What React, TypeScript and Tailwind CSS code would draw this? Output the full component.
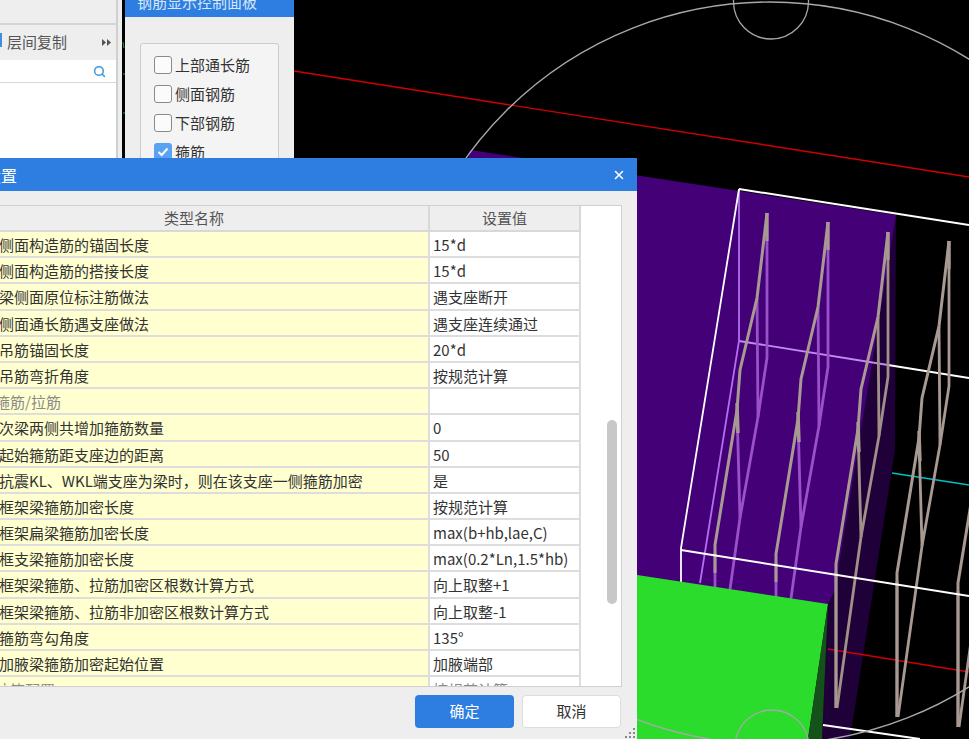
import { Search, X } from "lucide-react"

const font = { fontFamily: '"Noto Sans CJK SC", "Noto Sans", sans-serif' }

const rows = [
  { name: "侧面构造筋的锚固长度", value: "15*d" },
  { name: "侧面构造筋的搭接长度", value: "15*d" },
  { name: "梁侧面原位标注筋做法", value: "遇支座断开" },
  { name: "侧面通长筋遇支座做法", value: "遇支座连续通过" },
  { name: "吊筋锚固长度", value: "20*d" },
  { name: "吊筋弯折角度", value: "按规范计算" },
  { name: "箍筋/拉筋", value: "", section: true },
  { name: "次梁两侧共增加箍筋数量", value: "0" },
  { name: "起始箍筋距支座边的距离", value: "50" },
  { name: "抗震KL、WKL端支座为梁时，则在该支座一侧箍筋加密", value: "是" },
  { name: "框架梁箍筋加密长度", value: "按规范计算" },
  { name: "框架扁梁箍筋加密长度", value: "max(b+hb,lae,C)" },
  { name: "框支梁箍筋加密长度", value: "max(0.2*Ln,1.5*hb)" },
  { name: "框架梁箍筋、拉筋加密区根数计算方式", value: "向上取整+1" },
  { name: "框架梁箍筋、拉筋非加密区根数计算方式", value: "向上取整-1" },
  { name: "箍筋弯勾角度", value: "135°" },
  { name: "加腋梁箍筋加密起始位置", value: "加腋端部" },
  { name: "拉筋配置", value: "按规范计算", section: true },
]

const checks = [
  { label: "上部通长筋", checked: false },
  { label: "侧面钢筋", checked: false },
  { label: "下部钢筋", checked: false },
  { label: "箍筋", checked: true },
]

// stirrup tops in the 3d view, with leg colours; tanEnd is where the outer leg stops being tan
const stirrups = [
  { x: 767, y: 213, inner: "#9a50c8", tanEnd: 360 },
  { x: 828, y: 222, inner: "#9a50c8", tanEnd: 360 },
  { x: 888, y: 232, inner: "#a09088", tanEnd: 476 },
  { x: 949, y: 241, inner: "#a89a92", tanEnd: 476 },
  { x: 1010, y: 251, inner: "#a89a92", tanEnd: 476 },
]

function pts(x: number, y: number, list: number[][]) {
  return list.map((p) => `${x + p[0]},${y + p[1]}`).join(" ")
}

function Scene() {
  return (
    <svg className="absolute inset-0" width="969" height="739" viewBox="0 0 969 739" fill="none">
      <line x1="294" y1="71" x2="969" y2="177" stroke="#d00000" strokeWidth="1.4" />
      <line x1="123" y1="42" x2="124" y2="48" stroke="#1f9a3c" />
      <line x1="123" y1="74" x2="125" y2="74" stroke="#1a9a9a" />
      <line x1="123" y1="113" x2="125" y2="113" stroke="#1a9a9a" />
      <polygon points="896,215 895,450 850,739 822,739 828,604" fill="#200038" />
      <polygon points="470,150 896,215 835,590 828,604 400,604 400,165 467,165" fill="#440077" />
      <line x1="828" y1="649" x2="969" y2="672" stroke="#d00000" strokeWidth="1.4" />
      <line x1="892" y1="473" x2="969" y2="485" stroke="#00c0c8" strokeWidth="1.4" />

      <polyline points="739,341 888,365" stroke="#c08cf0" strokeWidth="1.8" />
      <polyline points="888,365 969,378" stroke="#ffffff" strokeWidth="1.8" />
      <polyline points="739,189 739,341 700,583" stroke="#b070f0" strokeWidth="1.8" />

      {stirrups.map((s) => (
        <g key={s.x} strokeLinejoin="round">
          <polyline
            points={pts(s.x, s.y, [[0, 0], [0, 145], [-9, 204], [-27, 305], [-51, 476]])}
            stroke={s.inner}
            strokeWidth="2.8"
          />
          <polyline points={pts(s.x, s.y, [[-10, 85], [-9, 204]])} stroke={s.inner} strokeWidth="2.8" />
          <polyline points={pts(s.x, s.y, [[-30, 197], [-27, 305]])} stroke={s.inner} strokeWidth="2.8" />
          <polyline points={pts(s.x, s.y, [[-52, 340], [-52, 476]])} stroke={s.inner} strokeWidth="2.8" />
          <polyline points={pts(s.x, s.y, [[0, 0], [0, 28]])} stroke="#a89a92" strokeWidth="3.2" />
          <polyline points={pts(s.x, s.y, [[-30, 190], [-29, 220]])} stroke="#a89a92" strokeWidth="3.4" />
          <polyline
            points={pts(s.x, s.y, [[0, 0], [-10, 85], [-27, 157], [-30, 197], [-52, 332], [-52, s.tanEnd]])}
            stroke="#a89a92"
            strokeWidth="3"
          />
        </g>
      ))}

      <polyline points="739,189 969,225" stroke="#ffffff" strokeWidth="2" />
      <polyline points="739,189 681,548 681,590" stroke="#ffffff" strokeWidth="1.8" />
      <polyline points="681,550 969,596" stroke="#ffffff" strokeWidth="2" />
      <polyline points="823,725 920,739" stroke="#ffffff" strokeWidth="2" />

      <polygon points="637,575 828,604 808,739 637,739" fill="#2cdc2c" />
      <polygon points="828,604 822,739 808,739" fill="#14521a" />

      <ellipse cx="770" cy="373" rx="373" ry="371" stroke="#a8a8a8" strokeWidth="1.4" />
      <circle cx="771" cy="1.5" r="37.5" stroke="#a8a8a8" strokeWidth="1.3" />
      <circle cx="772" cy="747" r="37" stroke="#a8a8a8" strokeWidth="1.3" />
    </svg>
  )
}

function LeftPanel() {
  return (
    <div className="w-[122px] h-[158px] bg-[#eeeeee] flex flex-col shrink-0">
      <div className="w-[118px] h-full border-r-2 border-[#cfcfcf] flex flex-col">
        <div className="h-[25px] border-b-2 border-[#d4d4d4]" />
        <div className="h-[35px] flex items-center relative pl-[7px] pr-1">
          <div className="absolute left-0 top-[8px] w-[2px] h-[14px] bg-[#3d8fe0]" />
          <span className="text-[15px] text-[#555555]">层间复制</span>
          <svg className="ml-auto mr-[1px]" width="9" height="7" viewBox="0 0 9 7">
            <path d="M0 0 L4 3.5 L0 7 Z M5 0 L9 3.5 L5 7 Z" fill="#555555" />
          </svg>
        </div>
        <div className="h-[23px] bg-white border-b border-[#d8d8d8] flex items-center justify-end pr-[10px]">
          <Search size={13} strokeWidth={3} color="#4a9fd8" />
        </div>
        <div className="flex-1 bg-white" />
      </div>
    </div>
  )
}

function RebarPanel() {
  return (
    <div className="ml-[3px] w-[169px] h-[200px] bg-[#eeeeee] shrink-0">
      <div className="h-[17px] bg-[#2d7ee0] overflow-hidden pl-[12px]">
        <div className="-mt-[8px] text-[15px] leading-[20px] text-[#d8e6f8]">钢筋显示控制面板</div>
      </div>
      <div className="ml-[15px] mt-[26px] w-[139px] h-[150px] bg-[#f4f4f4] border border-[#cccccc] rounded-[3px] pt-[12px] pl-[13px] flex flex-col gap-[11px]">
        {checks.map((c) => (
          <div key={c.label} className="flex items-center h-[18px] gap-[3px]">
            {c.checked ? (
              <div className="w-[18px] h-[18px] rounded-[3px] bg-[#5aa2f2] flex items-center justify-center">
                <svg width="12" height="10" viewBox="0 0 12 10" fill="none">
                  <path d="M1.5 5 L4.7 8 L10.5 1.5" stroke="#ffffff" strokeWidth="2" />
                </svg>
              </div>
            ) : (
              <div className="w-[18px] h-[18px] rounded-[3px] bg-[#fbfbfb] border border-[#8a8a8a]" />
            )}
            <span className="text-[15px] text-[#333333]">{c.label}</span>
          </div>
        ))}
      </div>
    </div>
  )
}

function SettingsDialog() {
  return (
    <div className="absolute left-[-40px] top-[158px] bottom-0 w-[677px] bg-[#eeeeee] flex flex-col">
      <div className="h-[33px] bg-[#2d7ee0] flex items-center pl-[25px] pr-[11px] text-white shrink-0">
        <span className="text-[16px]">设置</span>
        <X className="ml-auto" size={14} strokeWidth={2.6} />
      </div>

      <div className="relative mt-[14px] mr-[15px] h-[482px] bg-white border-t border-r border-b border-[#cfcfcf] overflow-hidden">
        <div className="w-[621px] h-[26px] flex bg-[#eeeeee] border-b-2 border-[#d8d8d8] text-[15px] text-[#555555]">
          <div className="w-[470px] border-r-2 border-[#d8d8d8] flex items-center justify-center">类型名称</div>
          <div className="w-[151px] border-r-2 border-[#d8d8d8] flex items-center justify-center">设置值</div>
        </div>
        {rows.map((r) => (
          <div key={r.name} className="w-[621px] h-[26.2px] flex text-[15px] leading-[26px]">
            <div
              className={
                r.section
                  ? "w-[470px] bg-[#ffffcf] border-r-2 border-b-2 border-[#dddddd] pl-[35px] text-[#8a8a8a]"
                  : "w-[470px] bg-[#ffffcf] border-r-2 border-b-2 border-[#dddddd] pl-[39px] text-[#333333]"
              }
            >
              {r.name}
            </div>
            <div
              className={
                r.section
                  ? "w-[151px] bg-white border-r-2 border-b-2 border-[#dddddd] pl-[3px] text-[#8a8a8a]"
                  : "w-[151px] bg-white border-r-2 border-b-2 border-[#dddddd] pl-[3px] text-[#333333]"
              }
            >
              {r.value}
            </div>
          </div>
        ))}
        <div className="absolute left-[647px] top-[214px] w-[10px] h-[184px] rounded-[5px] bg-[#c8c8c8]" />
      </div>

      <div className="flex justify-end gap-[8px] pt-[8px] pr-[16px]">
        <button className="w-[99px] h-[33px] rounded-[4px] bg-[#2d7ee0] text-white text-[15px]">确定</button>
        <button className="w-[99px] h-[33px] rounded-[4px] bg-white border border-[#dddddd] text-[#333333] text-[15px]">
          取消
        </button>
      </div>

      {/* resize grip */}
      <svg className="absolute right-[1px] bottom-[1px]" width="12" height="10" viewBox="0 0 12 10">
        <path d="M9 0h2v2H9z M5 4h2v2H5z M9 4h2v2H9z M1 8h2v2H1z M5 8h2v2H5z M9 8h2v2H9z" fill="#888888" />
      </svg>
    </div>
  )
}

export default function App() {
  return (
    <div className="relative w-full h-[739px] bg-black overflow-hidden" style={font}>
      <Scene />
      <div className="relative flex items-start">
        <LeftPanel />
        <RebarPanel />
      </div>
      <SettingsDialog />
    </div>
  )
}
